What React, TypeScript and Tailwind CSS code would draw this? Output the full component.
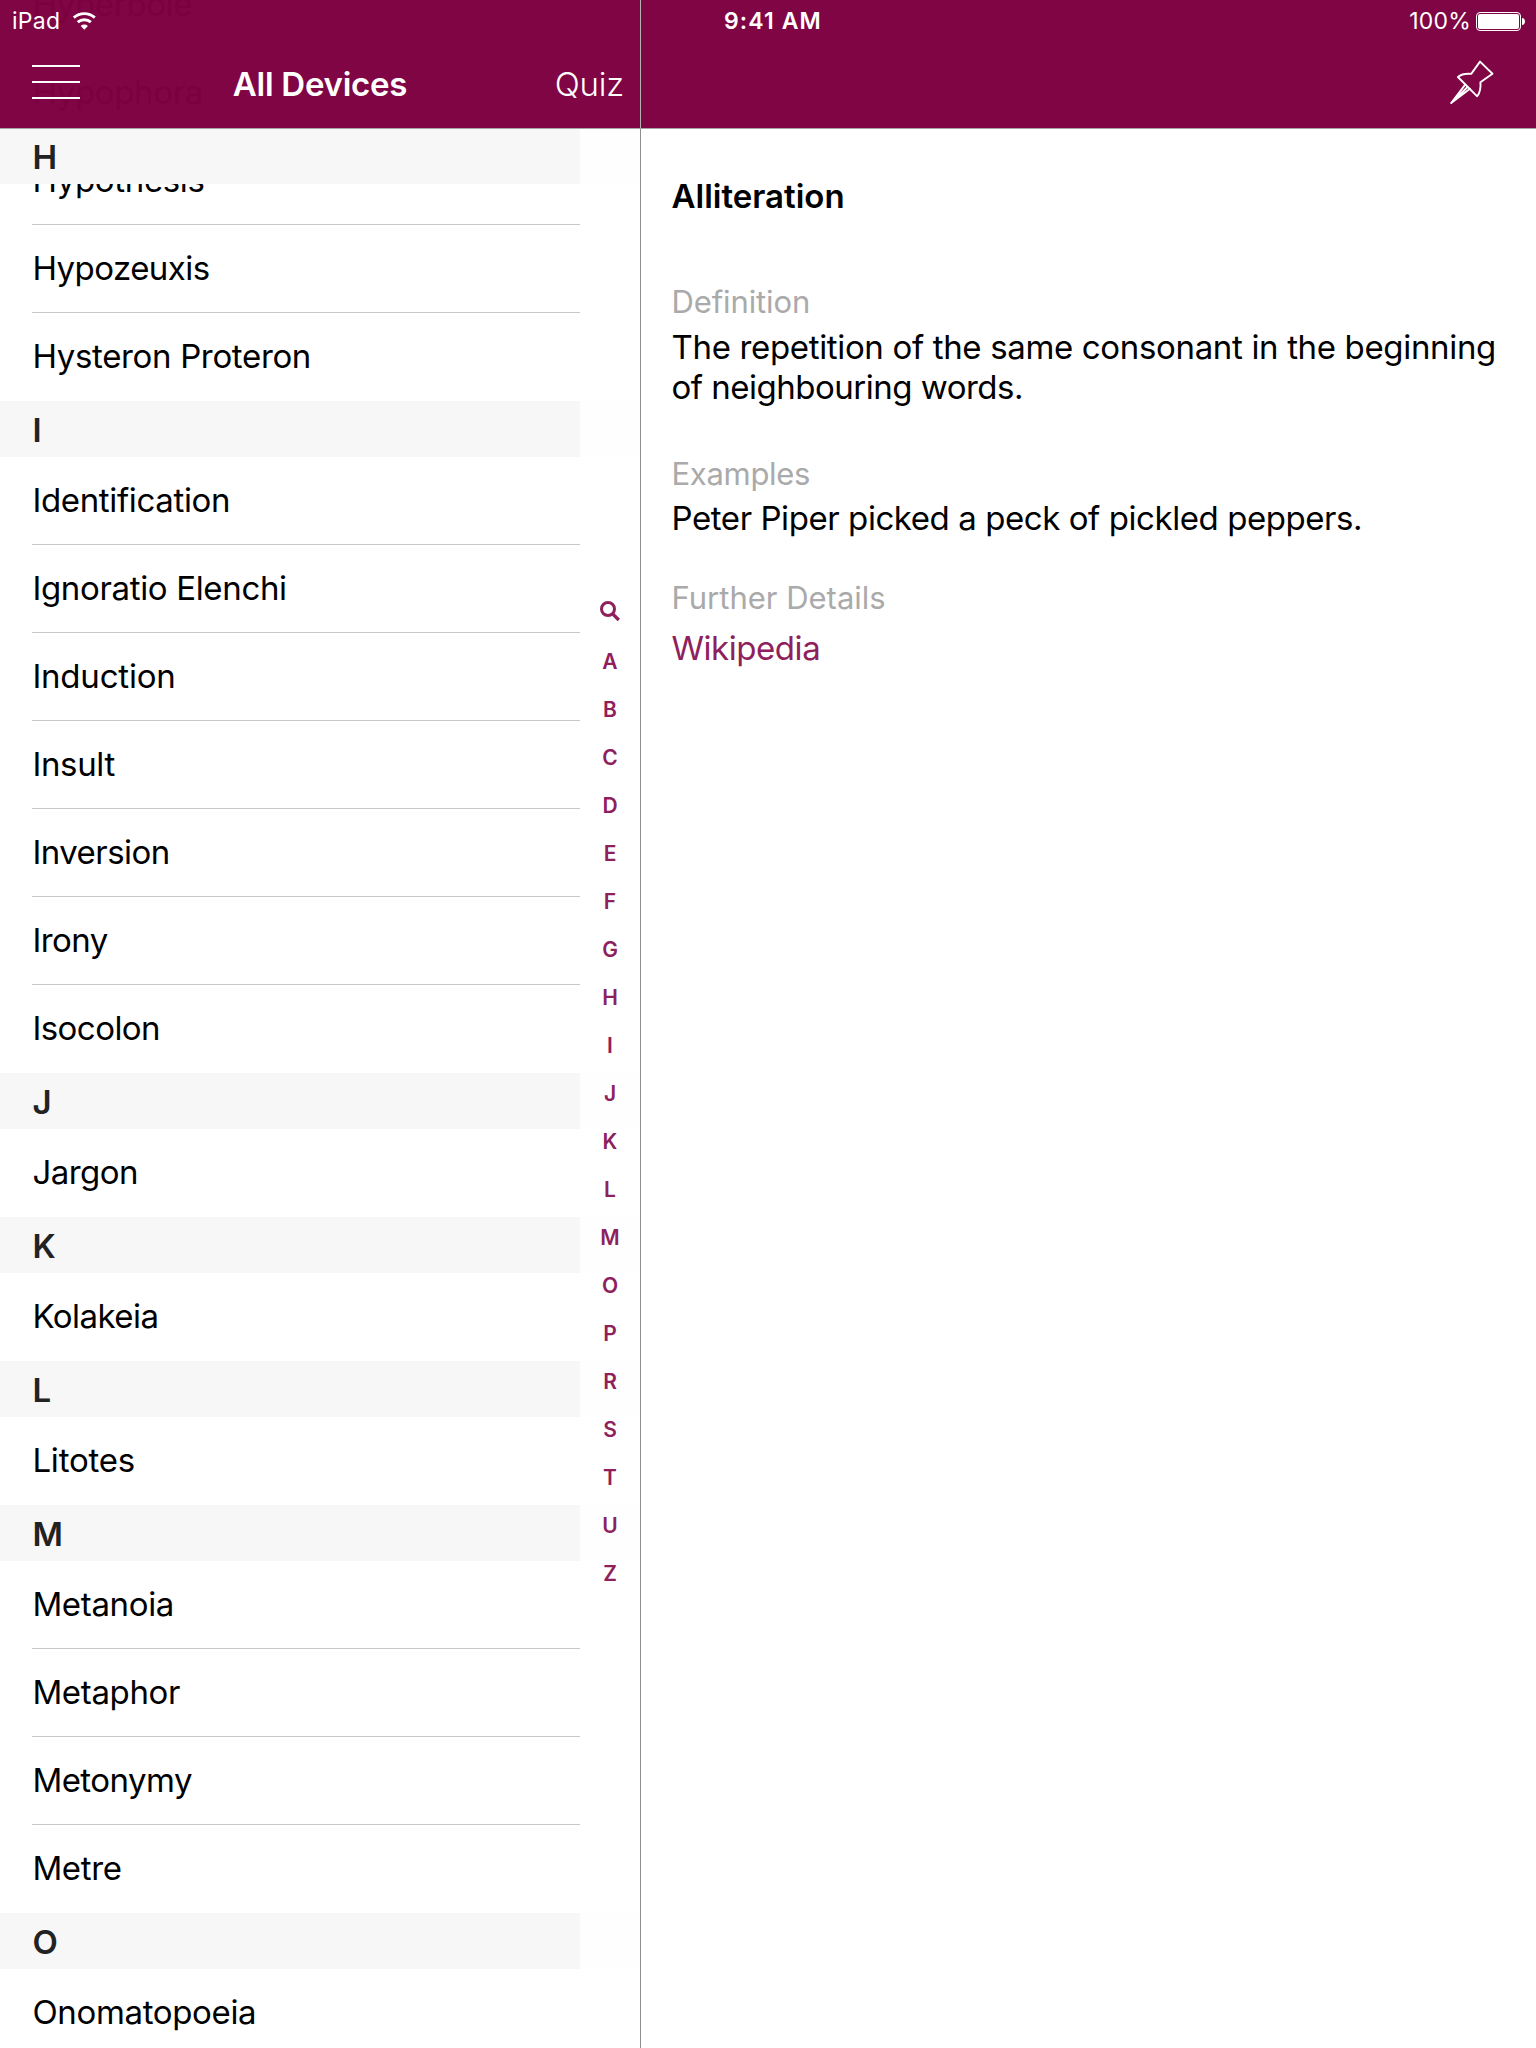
import React from "react";

type Section = { letter: string; rows: string[] };

const SECTIONS: Section[] = [
  { letter: "I", rows: ["Identification", "Ignoratio Elenchi", "Induction", "Insult", "Inversion", "Irony", "Isocolon"] },
  { letter: "J", rows: ["Jargon"] },
  { letter: "K", rows: ["Kolakeia"] },
  { letter: "L", rows: ["Litotes"] },
  { letter: "M", rows: ["Metanoia", "Metaphor", "Metonymy", "Metre"] },
  { letter: "O", rows: ["Onomatopoeia"] },
];
const H_ROWS = ["Hyperbole", "Hypophora", "Hypothesis", "Hypozeuxis", "Hysteron Proteron"];
const INDEX = "ABCDEFGHIJKLMOPRSTUZ".split("");

const TIGHT = new Set(["Hypozeuxis", "Metonymy", "Kolakeia", "Jargon", "Irony", "Inversion", "Isocolon"]);
const LOOSE = new Set(["Litotes", "Induction"]);

function tracking(text: string) {
  if (TIGHT.has(text)) return "tracking-[-0.54px]";
  if (LOOSE.has(text)) return "tracking-[-0.2px]";
  return "tracking-[-0.34px]";
}

function Row({ text, last }: { text: string; last: boolean }) {
  return (
    <div className="h-[88px] pl-[32px] pr-[60px]">
      <div className={last ? "flex h-full items-center pb-[3px]" : "flex h-full items-center border-b border-[#c8c7cc] pb-[2px]"}>
        <span className={`${tracking(text)} pl-[0.4px] text-[33px] leading-[40px] whitespace-nowrap text-black`}>{text}</span>
      </div>
    </div>
  );
}

function SectionHeader({ letter }: { letter: string }) {
  return (
    <div className="flex h-14 items-center bg-[#f7f7f7] pl-[32.5px] pt-0.5">
      <span className="text-[33px] font-semibold leading-[40px] text-[#222]">{letter}</span>
    </div>
  );
}

function IndexStrip() {
  return (
    <nav className="absolute bottom-0 right-0 top-32 flex w-[60px] flex-col items-center bg-white/85 pt-[462px]">
      <svg className="-mt-[2px] mb-[2px] h-12 w-5 text-[#8e215c]" viewBox="0 0 20 48" fill="none" stroke="currentColor">
        <circle cx="8" cy="21" r="6.5" strokeWidth="3" />
        <path d="M12.2 25.4 18.8 32" strokeWidth="3.4" />
      </svg>
      {INDEX.map((l) => (
        <span key={l} className="flex h-12 items-center text-[21px] font-semibold leading-6 text-[#8e215c]">{l}</span>
      ))}
    </nav>
  );
}

function WifiIcon() {
  return (
    <svg className="h-5 w-[25px]" viewBox="0 0 25 20" fill="none" stroke="currentColor" strokeWidth="2.9">
      <path d="M1.8 6.6a16 16 0 0 1 21 0" />
      <path d="M5.74 11.15a10 10 0 0 1 13.12 0" />
      <path d="M12.3 18.7 8.7 14.9a5.3 5.3 0 0 1 7.2 0Z" fill="currentColor" stroke="none" />
    </svg>
  );
}

function BatteryIcon() {
  return (
    <svg className="h-5 w-[50px]" viewBox="0 0 50 20">
      <rect x="0.5" y="1.5" width="44" height="18" rx="3.5" fill="none" stroke="currentColor" />
      <rect x="2" y="3" width="41" height="15" rx="2" fill="currentColor" />
      <path d="M46 7c1.9.2 3 1.6 3 3.5S47.900 13.800 46 14Z" fill="currentColor" />
    </svg>
  );
}

function PinIcon() {
  return (
    <svg className="h-11 w-11" viewBox="0 0 44 44" fill="none" stroke="currentColor" strokeWidth="1.9" strokeLinejoin="round" strokeLinecap="round">
      <path d="M30 1.600 42.500 13.700 30.400 22.300C31 28 29.600 33 27.200 36.300L7.900 17C11 14.300 15.500 13.500 21.200 13.900Z" />
      <path d="M15.200 24.600 1.200 43 20 28.800M17.600 27 1.200 43" />
    </svg>
  );
}

function TopBar() {
  return (
    <header className="absolute inset-x-0 top-0 flex h-[129px] border-b border-[#a5a5a5] bg-[rgba(125,0,64,0.98)] bg-clip-padding text-white">
      <div className="flex w-[641px] shrink-0 flex-col border-r border-[#b2b2b2]">
        <div className="flex h-10 items-center gap-3 pl-3 pt-px">
          <span className="w-12 text-[23px] leading-7 tracking-[0.3px]">iPad</span>
          <WifiIcon />
        </div>
        <div className="grid h-[88px] grid-cols-[1fr_auto_1fr] items-center pl-8 pr-4">
          <div className="mt-[-4px] flex w-12 flex-col gap-[14px]">
            <i className="h-0.5 bg-white" />
            <i className="h-0.5 bg-white" />
            <i className="h-0.5 bg-white" />
          </div>
          <h1 className="-ml-4 mt-[-1px] text-[33px] font-semibold leading-[40px] tracking-[-0.25px]">All Devices</h1>
          <span className="mt-[-1px] text-right text-[33px] font-light leading-[40px] tracking-[-0.2px]">Quiz</span>
        </div>
      </div>
      <div className="flex flex-1 flex-col">
        <div className="flex h-10 items-center justify-between pl-[83px] pr-[10px] pt-px">
          <span className="text-[23px] font-semibold leading-7 tracking-[1.1px]">9:41 AM</span>
          <div className="flex items-center gap-[5px]">
            <span className="text-[23px] leading-7 tracking-[0.2px]">100%</span>
            <BatteryIcon />
          </div>
        </div>
        <div className="flex h-[88px] justify-end pr-[42px] pt-5">
          <PinIcon />
        </div>
      </div>
    </header>
  );
}

export default function App() {
  return (
    <div className="relative flex h-[2048px] w-[1536px] overflow-hidden bg-white font-['Inter',sans-serif]">
      <aside className="relative h-full w-[640px] shrink-0 overflow-hidden">
        <div className="-mt-[39px]">
          {H_ROWS.map((r, i) => <Row key={r} text={r} last={i === H_ROWS.length - 1} />)}
          {SECTIONS.map((s) => (
            <section key={s.letter}>
              <SectionHeader letter={s.letter} />
              {s.rows.map((r, i) => <Row key={r} text={r} last={i === s.rows.length - 1} />)}
            </section>
          ))}
        </div>
        <div className="absolute inset-x-0 top-32"><SectionHeader letter="H" /></div>
        <IndexStrip />
      </aside>
      <main className="h-full flex-1 border-l border-[#8e8e93] pl-[30.5px] pt-32 text-[33px] leading-[40px] text-black">
        <h2 className="mt-[48px] font-semibold">Alliteration</h2>
        <p className="mt-[66px] text-[31px] leading-[40px] tracking-[-0.12px] text-[#aaa]">Definition</p>
        <p className="mt-[5px] tracking-[-0.34px]">
          The repetition of the same consonant in the beginning
          <br />
          <span className="tracking-[-0.5px]">of neighbouring words.</span>
        </p>
        <p className="mt-[47px] text-[31px] leading-[40px] tracking-[-0.3px] text-[#aaa]">Examples</p>
        <p className="mt-[4px] tracking-[-0.43px]">Peter Piper picked a peck of pickled peppers.</p>
        <p className="mt-[40px] text-[31px] leading-[40px] text-[#aaa]">Further Details</p>
        <p className="mt-[10px] tracking-[-0.45px] text-[#8e215c]">Wikipedia</p>
      </main>
      <TopBar />
    </div>
  );
}
